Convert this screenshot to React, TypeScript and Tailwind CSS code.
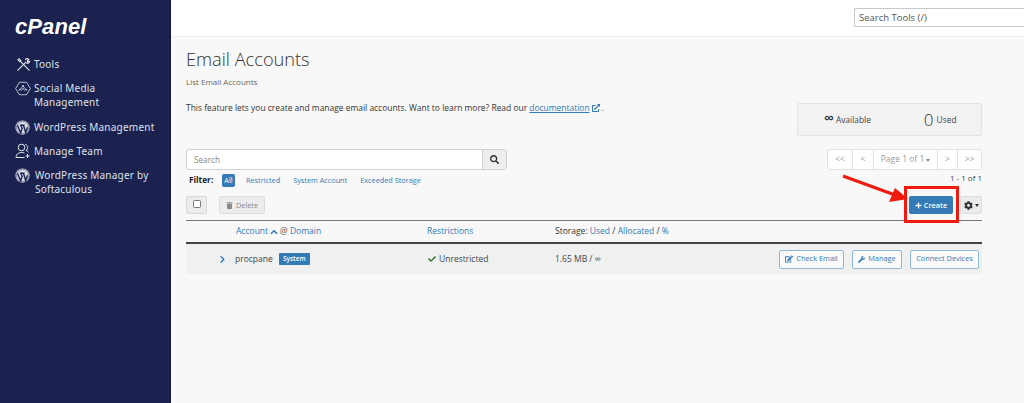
import { ChevronRight, ChevronUp } from 'lucide-react';
import { FaCheck, FaCog, FaEdit, FaExternalLinkAlt, FaPlus, FaSearch, FaTrash, FaWrench } from 'react-icons/fa';

function WpIcon() {
  return (
    <span className="w-[16px] h-[14px] shrink-0 flex items-center">
      <svg width="15" height="15" viewBox="0 0 16 16" className="shrink-0">
        <circle cx="8" cy="8" r="7.6" fill="#d8dae3" />
        <circle cx="8" cy="8" r="6.5" fill="none" stroke="#1b2250" strokeWidth="0.5" />
        <path d="M2.6 5.6 6 13.6l1.6-4.4-1.3-3.6h-1M6 5.6h4.2M9 5.6l2.4 7.8 1.9-5.6" fill="none" stroke="#1b2250" strokeWidth="1.5" />
      </svg>
    </span>
  );
}

function ToolsIcon() {
  return (
    <span className="w-[16px] h-[14px] shrink-0 flex items-center justify-center">
      <svg width="15" height="15" viewBox="0 0 16 16" fill="none" stroke="#e4e6ee" strokeWidth="1.2" strokeLinecap="round" className="shrink-0">
        <path d="M2 14 10.5 5.5" />
        <path d="M10 2.6c1.2-1 2.8-.9 3.6 0L12 4.4l.6 1 1.8-.9c.3 1.4-1.2 2.6-3 2" />
        <path d="M14 14 4.5 4.5" />
        <path d="m2 3 1.2-1.2 2 2-1.2 1.2z" />
      </svg>
    </span>
  );
}

function SocialIcon() {
  return (
    <span className="w-[16px] h-[14px] shrink-0 flex items-center">
      <svg width="16" height="15" viewBox="0 0 18 16" fill="none" stroke="#e4e6ee" strokeWidth="0.9" className="shrink-0">
        <path d="M5 1h8l4.3 7-4.3 7H5L.7 8z" />
        <path d="M4.5 10.5 7 7.5l2-2 2 2 2.5 3M7 10.5l2-3 2 3" strokeWidth="0.8" />
        <circle cx="9" cy="5.2" r="1" fill="#e4e6ee" stroke="none" />
        <circle cx="5.5" cy="9" r="0.8" fill="#e4e6ee" stroke="none" />
        <circle cx="12.5" cy="9" r="0.8" fill="#e4e6ee" stroke="none" />
      </svg>
    </span>
  );
}

function TeamIcon() {
  return (
    <span className="w-[16px] h-[14px] shrink-0 flex items-center">
      <svg width="16" height="16" viewBox="0 0 16 16" fill="none" stroke="#e4e6ee" strokeWidth="1" className="shrink-0">
        <circle cx="6.5" cy="4.5" r="3.3" />
        <path d="M1 14.5c0-3 2.2-5 5.5-5 1.2 0 2.2.2 3 .7M1 14.5h8.5" />
        <path d="M10.2 1.5c1.6.4 2.5 1.6 2.5 3s-.7 2.4-1.8 2.9c1 .4 2 1 2.6 1.8" />
        <path d="M12.5 11v4M10.5 13h4" />
      </svg>
    </span>
  );
}

function Sidebar() {
  const item = 'flex items-start gap-[3px] text-[10px] leading-[14px] tracking-[0.22px] text-[#dfe1ea] whitespace-nowrap';
  return (
    <aside className="w-[171px] shrink-0 bg-[#1b2250] pl-[15px] pt-[15px] border-r border-[#14193c]">
      <div className="font-['Liberation_Sans',sans-serif] italic font-bold text-white text-[22px] leading-[24px] tracking-[0.1px]">cPanel</div>
      <nav className="mt-[18px] flex flex-col gap-[10px] font-['Noto_Sans',sans-serif]">
        <div className={item}><ToolsIcon /><span>Tools</span></div>
        <div className={`${item} mb-[1px]`}><SocialIcon /><span>Social Media<br />Management</span></div>
        <div className={item}><WpIcon /><span>WordPress Management</span></div>
        <div className={item}><TeamIcon /><span>Manage Team</span></div>
        <div className={item}><WpIcon /><span className="pl-[1px]">WordPress Manager by<br />Softaculous</span></div>
      </nav>
    </aside>
  );
}

function Pagination() {
  const cell = 'h-full flex items-center justify-center border-r border-[#e2e2e2] last:border-r-0';
  return (
    <div className="flex w-[155px] h-[21px] bg-white border border-[#e2e2e2] rounded-[3px] text-[#9a9a9a] text-[8.5px]">
      <div className={`${cell} w-[25px]`}>&lt;&lt;</div>
      <div className={`${cell} w-[21px]`}>&lt;</div>
      <div className={`${cell} w-[64px] gap-[2px] whitespace-nowrap`}>Page 1 of 1<span className="border-x-[2.5px] border-t-[3px] border-x-transparent border-t-[#888] mt-[1px]" /></div>
      <div className={`${cell} w-[20px]`}>&gt;</div>
      <div className={`${cell} flex-1`}>&gt;&gt;</div>
    </div>
  );
}

function RowButton({ children, width }: { children: React.ReactNode; width: string }) {
  return (
    <button className={`${width} h-[19px] flex items-center justify-center gap-[3px] border border-[#8fb8dd] rounded-[2px] bg-[#fafafa] text-[#337ab7] text-[7.4px]`}>
      {children}
    </button>
  );
}

export default function App() {
  return (
    <div className="w-[1024px] h-[403px] overflow-hidden flex bg-[#f8f8f8] font-['Open_Sans',sans-serif] text-[#333]">
      <Sidebar />
      <div className="flex-1 min-w-0 flex flex-col relative">
        <header className="h-[37px] shrink-0 bg-white border-b border-[#eeeeee] flex justify-end items-start pt-[8px]">
          <div className="w-[170px] h-[19px] bg-white border border-[#c8c8c8] rounded-l-[2px] border-r-0 pl-[4px] text-[9.5px] leading-[17px] text-[#555]">Search Tools (/)</div>
        </header>

        <main className="pl-[15px] pr-[42px] flex flex-col">
          <h1 className="mt-[8px] font-light text-[18.2px] leading-[29px] text-[#333]">Email Accounts</h1>
          <p className="mt-[2px] text-[8px] leading-[12px] text-[#666]">List Email Accounts</p>

          <div className="flex justify-between items-start h-[61px]">
            <p className="mt-[13px] text-[8.45px] leading-[13px] text-[#333] flex items-center">
              This feature lets you create and manage email accounts. Want to learn more? Read our&nbsp;
              <span className="text-[#337ab7] underline">documentation</span>
              <FaExternalLinkAlt size={8} className="ml-[2px] text-[#337ab7]" />
              <span className="ml-[2px]">.</span>
            </p>
            <div className="mt-[15px] w-[185px] h-[33px] shrink-0 bg-[#f2f2f2] border border-[#e3e3e3] rounded-[2px] flex items-center pl-[26px]">
              <span className="text-[14px] leading-none mr-[2px] font-semibold -mt-[3px]">∞</span>
              <span className="text-[8.4px] text-[#444] mt-[1px]">Available</span>
              <span className="ml-[53px] text-[17px] font-light leading-none">0</span>
              <span className="ml-[3px] text-[8.4px] text-[#444] mt-[1px]">Used</span>
            </div>
          </div>

          <div className="flex justify-between items-start h-[47px]">
            <div>
              <div className="w-[321px] h-[21px] flex bg-white border border-[#d0d0d0] rounded-[3px]">
                <div className="flex-1 pl-[7px] text-[8.2px] leading-[19px] text-[#888]">Search</div>
                <div className="w-[24px] flex items-center justify-center bg-[#eeeeee] border-l border-[#d0d0d0]">
                  <FaSearch size={9} className="text-[#333]" />
                </div>
              </div>
              <div className="flex items-center mt-[4px] pl-[3px] h-[13px] text-[7.3px]">
                <span className="font-bold text-[8.3px] text-[#222] w-[33px]">Filter:</span>
                <span className="w-[13px] h-[13px] flex items-center justify-center rounded-[2px] bg-[#337ab7] text-white mr-[11px]">All</span>
                <span className="text-[#337ab7] mr-[13px]">Restricted</span>
                <span className="text-[#337ab7] mr-[13px]">System Account</span>
                <span className="text-[#337ab7]">Exceeded Storage</span>
              </div>
            </div>
            <div className="flex flex-col items-end">
              <Pagination />
              <div className="mt-[2px] text-[8px] text-[#444]">1 - 1 of 1</div>
            </div>
          </div>

          <div className="flex items-center h-[18px]">
            <div className="w-[21px] h-[18px] bg-[#ececec] border border-[#d8d8d8] rounded-[2px] flex items-center justify-center">
              <span className="w-[8px] h-[8px] bg-white border border-[#777] rounded-[1.5px] -mt-[2px]" />
            </div>
            <div className="ml-[12px] w-[46px] h-[18px] bg-[#ececec] border border-[#dcdcdc] rounded-[2px] flex items-center justify-center gap-[3px] text-[7.3px] text-[#888]">
              <FaTrash size={7} />Delete
            </div>
            <div className="ml-auto w-[44px] h-[18px] bg-[#337ab7] rounded-[2px] flex items-center justify-center gap-[2px] text-white text-[7.3px] font-semibold">
              <FaPlus size={7} />Create
            </div>
            <div className="ml-[7px] w-[22px] h-[18px] bg-[#ececec] border border-[#dcdcdc] rounded-[2px] flex items-center justify-center gap-[2px]">
              <FaCog size={9} className="text-[#333]" />
              <span className="border-x-[2.5px] border-t-[3px] border-x-transparent border-t-[#333]" />
            </div>
          </div>

          <div className="mt-[6px] h-[24px] border-t border-[#777] border-b-2 border-b-[#444] flex items-center text-[8.5px] pl-[50px]">
            <div className="w-[191px] flex items-center text-[#337ab7]">
              Account<ChevronUp size={10} strokeWidth={4} className="mx-[1px]" /><span className="text-[#555]">@&nbsp;</span>Domain
            </div>
            <div className="w-[128px] text-[#337ab7]">Restrictions</div>
            <div className="text-[#333]">Storage: <span className="text-[#337ab7]">Used</span> / <span className="text-[#337ab7]">Allocated</span> / <span className="text-[#337ab7]">%</span></div>
          </div>

          <div className="h-[30px] bg-[#f0f0f0] flex items-center text-[8.5px] pl-[31px] pr-[3px]">
            <ChevronRight size={11} strokeWidth={3} className="text-[#337ab7] shrink-0" />
            <div className="ml-[7px] w-[192px] flex items-center">
              <span className="text-[#444]">procpane</span>
              <span className="ml-[6px] h-[12px] w-[31px] bg-[#337ab7] rounded-[1px] text-white text-[6.5px] font-semibold leading-[12px] text-center">System</span>
            </div>
            <div className="w-[128px] flex items-center text-[#444]">
              <FaCheck size={8} className="text-[#2f7d32] ml-[1px] mr-[3px]" />Unrestricted
            </div>
            <span className="text-[#444]">1.65 MB / ∞</span>
            <div className="ml-auto flex gap-[8px]">
              <RowButton width="w-[65px]"><FaEdit size={8} />Check Email</RowButton>
              <RowButton width="w-[50px]"><FaWrench size={7} />Manage</RowButton>
              <RowButton width="w-[69px]">Connect Devices</RowButton>
            </div>
          </div>
        </main>

        <div className="absolute left-[733px] top-[186px] w-[55px] h-[37px] border-[3px] border-[#f01a0f]" />
        <svg className="absolute left-[665px] top-[170px]" width="80" height="50" viewBox="0 0 80 50">
          <path d="M7 6 59 25" stroke="#f01a0f" strokeWidth="3" />
          <path d="M59 18 53 32 72 29z" fill="#f01a0f" />
        </svg>
      </div>
    </div>
  );
}
